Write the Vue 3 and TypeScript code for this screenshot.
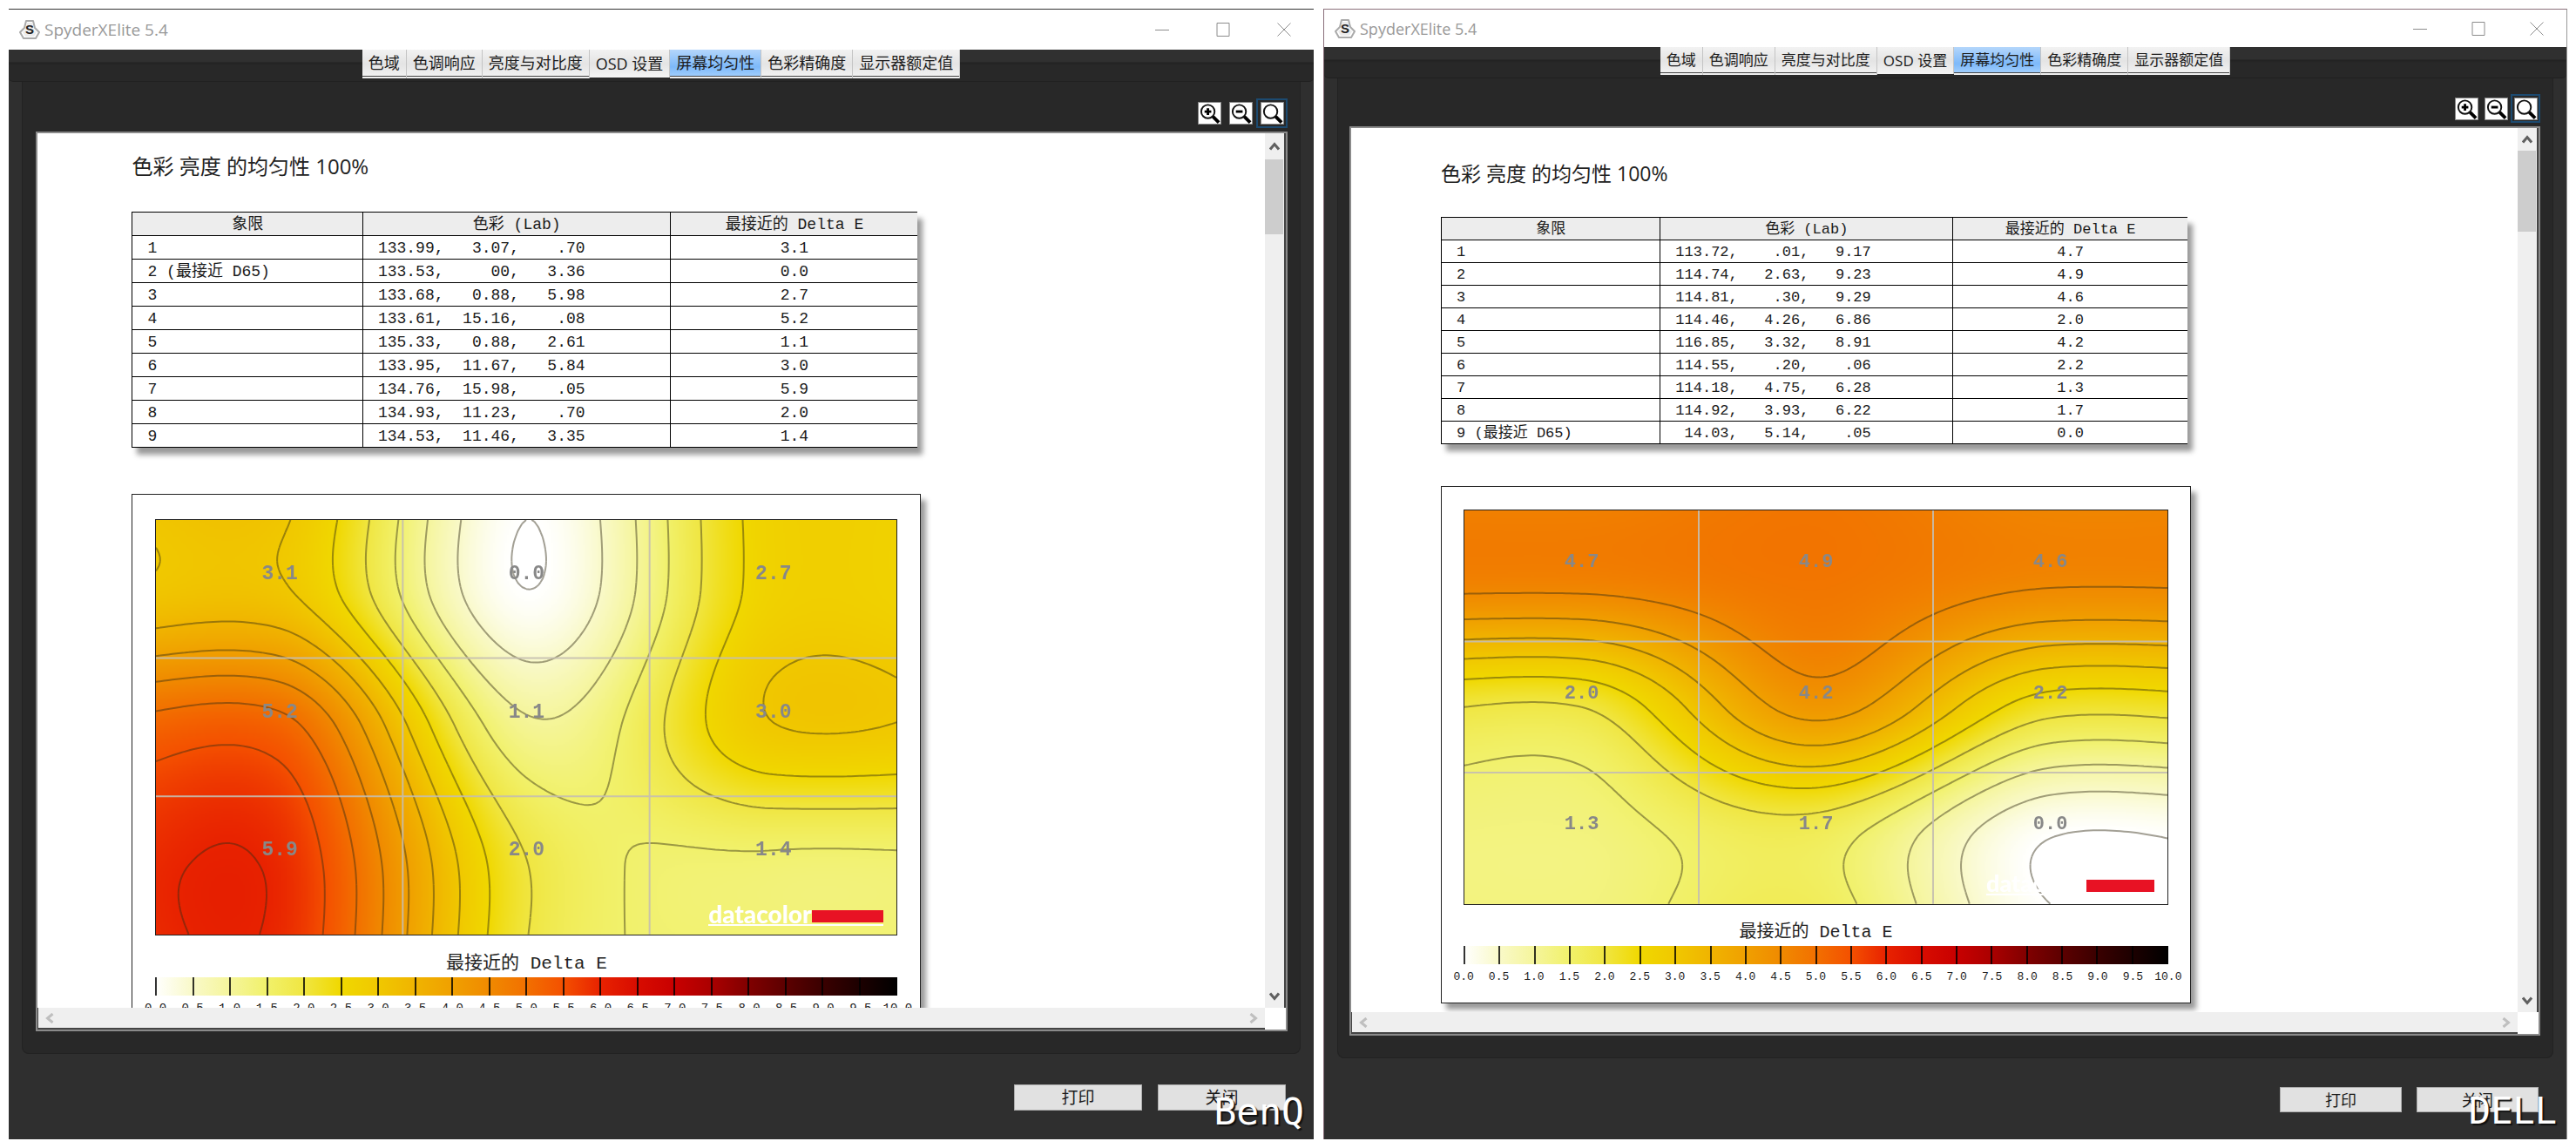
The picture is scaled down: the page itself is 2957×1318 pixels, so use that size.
<script setup lang="ts">
import { onMounted } from 'vue'

interface Row {
  name: string
  lab: string
  delta: string
  reading: number
}

interface Report {
  id: string
  brand: string
  rows: Row[]
  contours: string
}

const tabs = ['色域', '色调响应', '亮度与对比度', 'OSD 设置', '屏幕均匀性', '色彩精确度', '显示器额定值']
const activeTab = '屏幕均匀性'
const ticks = Array.from({ length: 21 }, (_, i) => (i * 0.5).toFixed(1))

// Delta E colour scale, one stop for every half unit from 0 to 10.
const stops = [
  'ffffff', 'f9f9c9', 'f5f59c', 'f1f16b', 'f0e642', 'f0d800', 'f0c800', 'f0b400', 'f0a000', 'f08a00', 'f27000',
  'f45000', 'e82200', 'd80c00', 'c80000', 'aa0000', '800000', '5c0000', '3a0000', '1c0000', '000000',
]
const palette = stops.map((s) => [0, 2, 4].map((i) => parseInt(s.slice(i, i + 2), 16)))
const scaleGradient = `linear-gradient(to right, ${stops.map((s) => '#' + s).join(', ')})`

// Measured quadrants sit at cell centres; the edge repeats the nearest reading.
const knots = [0, 1 / 6, 1 / 2, 5 / 6, 1]

// Cubic Hermite curve: parabolic slopes inside, no curvature at the two ends.
function spline(v: number[]): (t: number) => number {
  const y = [v[0], v[0], v[1], v[2], v[2]]
  const d = [0, (v[1] - v[0]) * 3, (v[2] - v[1]) * 3, 0]
  const left = d[1] / 3
  const right = d[2] / 3
  const m = [-left / 2, left, (d[1] + d[2]) / 2, right, -right / 2]
  return (t) => {
    let k = 0
    while (k < 3 && t > knots[k + 1]) k++
    const h = knots[k + 1] - knots[k]
    const s = (t - knots[k]) / h
    const u = 1 - s
    return (
      y[k] * (1 + 2 * s) * u * u +
      y[k + 1] * s * s * (3 - 2 * s) +
      h * (m[k] * s * u * u - m[k + 1] * s * s * u)
    )
  }
}

function field(rows: Row[], w: number, h: number): number[][] {
  const v = rows.map((r) => r.reading)
  const across = [spline(v.slice(0, 3)), spline(v.slice(3, 6)), spline(v.slice(6, 9))]
  const out: number[][] = Array.from({ length: h + 1 }, () => [])
  for (let i = 0; i <= w; i++) {
    const down = spline(across.map((f) => f(i / w)))
    for (let j = 0; j <= h; j++) out[j][i] = down(j / h)
  }
  return out
}

function traceContours(rows: Row[]): string {
  const w = 180
  const h = 100
  const f = field(rows, w, h)
  const parts: string[] = []
  for (let level = 0; level < 10; level += 0.5) {
    const cut = level + 0.0001
    for (let j = 0; j < h; j++) {
      for (let i = 0; i < w; i++) {
        const corner: [number, number, number][] = [
          [i, j, f[j][i]],
          [i + 1, j, f[j][i + 1]],
          [i + 1, j + 1, f[j + 1][i + 1]],
          [i, j + 1, f[j + 1][i]],
        ]
        const hits: string[] = []
        corner.forEach((p, k) => {
          const q = corner[(k + 1) % 4]
          if (p[2] < cut !== q[2] < cut) {
            const t = (cut - p[2]) / (q[2] - p[2])
            hits.push(`${(p[0] + t * (q[0] - p[0])).toFixed(2)} ${(p[1] + t * (q[1] - p[1])).toFixed(2)}`)
          }
        })
        if (hits.length >= 2) parts.push(`M${hits[0]}L${hits[1]}`)
      }
    }
  }
  return parts.join('')
}

function paint(canvas: HTMLCanvasElement, rows: Row[]) {
  const ctx = canvas.getContext('2d')
  if (!ctx) return
  const { width, height } = canvas
  const f = field(rows, width - 1, height - 1)
  const img = ctx.createImageData(width, height)
  for (let j = 0; j < height; j++) {
    for (let i = 0; i < width; i++) {
      const v = Math.min(9.999, Math.max(0, f[j][i])) * 2
      const k = Math.floor(v)
      const o = (j * width + i) * 4
      for (let ch = 0; ch < 3; ch++) {
        img.data[o + ch] = palette[k][ch] + (palette[k + 1][ch] - palette[k][ch]) * (v - k)
      }
      img.data[o + 3] = 255
    }
  }
  ctx.putImageData(img, 0, 0)
}

// The optional fourth entry is the reading before it is rounded for display.
function makeReport(id: string, brand: string, source: [string, string, string, number?][]): Report {
  const rows = source.map(([name, lab, delta, exact]) => ({ name, lab, delta, reading: exact ?? Number(delta) }))
  return { id, brand, rows, contours: traceContours(rows) }
}

const reports: Report[] = [
  makeReport('benq', 'BenQ', [
    ['1', '133.99,   3.07,    .70', '3.1', 3.06],
    ['2 (最接近 D65)', '133.53,     00,   3.36', '0.0'],
    ['3', '133.68,   0.88,   5.98', '2.7'],
    ['4', '133.61,  15.16,    .08', '5.2'],
    ['5', '135.33,   0.88,   2.61', '1.1'],
    ['6', '133.95,  11.67,   5.84', '3.0', 2.98],
    ['7', '134.76,  15.98,    .05', '5.9', 5.92],
    ['8', '134.93,  11.23,    .70', '2.0', 2.02],
    ['9', '134.53,  11.46,   3.35', '1.4', 1.41],
  ]),
  makeReport('dell', 'DELL', [
    ['1', '113.72,    .01,   9.17', '4.7'],
    ['2', '114.74,   2.63,   9.23', '4.9'],
    ['3', '114.81,    .30,   9.29', '4.6'],
    ['4', '114.46,   4.26,   6.86', '2.0'],
    ['5', '116.85,   3.32,   8.91', '4.2'],
    ['6', '114.55,    .20,    .06', '2.2'],
    ['7', '114.18,   4.75,   6.28', '1.3'],
    ['8', '114.92,   3.93,   6.22', '1.7'],
    ['9 (最接近 D65)', ' 14.03,   5.14,    .05', '0.0'],
  ]),
]

const canvases: Record<string, HTMLCanvasElement> = {}
const keepCanvas = (id: string) => (el: unknown) => {
  if (el) canvases[id] = el as HTMLCanvasElement
}

onMounted(() => {
  for (const r of reports) paint(canvases[r.id], r.rows)
})
</script>

<template>
  <main class="compare">
    <section v-for="r in reports" :key="r.id" class="window" :class="r.id">
      <header class="titlebar">
        <svg class="app-icon" viewBox="0 0 24 24" aria-hidden="true">
          <path d="M8 2h8l2 8 5 5-4 7H5l-4-7 5-5z" fill="#fff" stroke="#aaa" stroke-width="2" stroke-linejoin="round" />
          <path d="M9 4h6l2 8 3 3-3 5H7l-3-5 3-3z" fill="#ececec" />
          <text x="12" y="17" text-anchor="middle" font-size="15" font-weight="700" fill="#222">S</text>
        </svg>
        <h1>SpyderXElite 5.4</h1>
        <div class="controls">
          <button type="button" aria-label="最小化"><svg viewBox="0 0 16 16"><path d="M0 8.500h16" /></svg></button>
          <button type="button" aria-label="最大化"><svg viewBox="0 0 16 16"><path d="M1 .5h14v15H1z" /></svg></button>
          <button type="button" aria-label="关闭窗口"><svg viewBox="0 0 16 16"><path d="M.5.5l15 15M15.500.5l-15 15" /></svg></button>
        </div>
      </header>

      <div class="frame">
        <nav class="tabstrip" role="tablist">
          <button
            v-for="t in tabs"
            :key="t"
            type="button"
            role="tab"
            class="tab"
            :class="{ active: t === activeTab, flat: t.startsWith('OSD') }"
            :aria-selected="t === activeTab"
          >{{ t }}</button>
        </nav>

        <div class="panel">
          <div class="tools">
            <button type="button" aria-label="放大">
              <svg viewBox="0 0 28 26"><circle cx="12" cy="11" r="8" /><path class="handle" d="M18 17l7 7" /><path class="sign" d="M8 11h8M12 7v8" /></svg>
            </button>
            <button type="button" aria-label="缩小">
              <svg viewBox="0 0 28 26"><circle cx="12" cy="11" r="8" /><path class="handle" d="M18 17l7 7" /><path class="sign" d="M8 11h8" /></svg>
            </button>
            <button type="button" class="focused" aria-label="适合窗口">
              <svg viewBox="0 0 28 26"><circle cx="12" cy="11" r="8" /><path class="handle" d="M18 17l7 7" /></svg>
            </button>
          </div>

          <div class="view">
            <div class="sheet">
              <article class="report">
                <h2>色彩 亮度 的均匀性 100%</h2>
                <table>
                  <thead>
                    <tr><th scope="col">象限</th><th scope="col">色彩 (Lab)</th><th scope="col">最接近的 Delta E</th></tr>
                  </thead>
                  <tbody>
                    <tr v-for="row in r.rows" :key="row.name">
                      <td>{{ row.name }}</td>
                      <td class="lab">{{ row.lab }}</td>
                      <td class="delta">{{ row.delta }}</td>
                    </tr>
                  </tbody>
                </table>

                <figure class="card">
                  <div class="plot">
                    <canvas :ref="keepCanvas(r.id)" width="480" height="270"></canvas>
                    <svg viewBox="0 0 180 100" preserveAspectRatio="none" aria-hidden="true">
                      <path class="contour" :d="r.contours" />
                      <path class="thirds" d="M60 0v100M120 0v100M0 33.333h180M0 66.667h180" />
                    </svg>
                    <div class="cells">
                      <span v-for="row in r.rows" :key="row.name">{{ row.delta }}</span>
                    </div>
                    <div class="logo"><span>datacolor</span><i></i></div>
                  </div>
                  <figcaption>最接近的 Delta E</figcaption>
                  <div class="scale" :style="{ background: scaleGradient }"><i v-for="t in ticks" :key="t"></i></div>
                  <div class="numbers"><span v-for="t in ticks" :key="t">{{ t }}</span></div>
                </figure>
              </article>
            </div>
            <div class="vbar">
              <button type="button" aria-label="向上滚动"><svg viewBox="0 0 12 10"><path d="M1 8.500l5-6 5 6" /></svg></button>
              <div class="thumb"></div>
              <button type="button" class="end" aria-label="向下滚动"><svg viewBox="0 0 12 10"><path d="M1 1.500l5 6 5-6" /></svg></button>
            </div>
            <div class="hbar">
              <button type="button" aria-label="向左滚动"><svg viewBox="0 0 10 12"><path d="M8.500 1l-6 5 6 5" /></svg></button>
              <button type="button" aria-label="向右滚动"><svg viewBox="0 0 10 12"><path d="M1.500 1l6 5-6 5" /></svg></button>
            </div>
            <div class="corner"></div>
          </div>
        </div>

        <footer>
          <button type="button">打印</button>
          <button type="button">关闭</button>
        </footer>
      </div>
      <strong class="brand">{{ r.brand }}</strong>
    </section>
  </main>
</template>

<style>
body {
  margin: 0;
  background: #fff;
}
</style>

<style scoped>
* {
  box-sizing: border-box;
}
button {
  margin: 0;
  padding: 0;
  border: 0;
  background: none;
  font: inherit;
  color: inherit;
}
svg {
  display: block;
}
.compare {
  display: grid;
  grid-template-columns: 1498fr 1428fr;
  gap: 11px;
  height: 100vh;
  padding: 10px;
  font-family: "Open Sans", "Noto Sans CJK SC", sans-serif;
}
.window {
  --title-h: 46px;
  --title-font: 19px;
  --tab-font: 18px;
  --tab-h: 33px;
  --strip-h: 37px;
  --tool-w: 36px;
  --tool-h: 34px;
  --tools-top: 19px;
  --tools-bottom: 4px;
  --panel-left: 15px;
  --thumb-h: 86px;
  --thumb-top: 30px;
  --head-font: 24px;
  --head-top: 20px;
  --head-bottom: 34px;
  --row-h: 27px;
  --table-font: 18px;
  --card-top: 53px;
  --pad-top: 28px;
  --pad: 26px;
  --cell-font: 23px;
  --cell-top: 48px;
  --caption-font: 21px;
  --caption-top: 19px;
  --number-font: 14px;
  --logo-font: 28px;
  --logo-bar: 82px;
  --foot-h: 98px;
  --foot-top: 35px;
  --foot-gap: 18px;
  --foot-w: 147px;
  --foot-btn: 30px;
  --foot-font: 19px;
  --brand-font: 43px;
  position: relative;
  display: flex;
  flex-direction: column;
  min-width: 0;
  min-height: 0;
  border-top: 1px solid #333;
}
.window.dell {
  --title-h: 43px;
  --title-font: 18px;
  --tab-font: 17px;
  --tab-h: 32px;
  --strip-h: 36px;
  --tool-w: 34px;
  --tool-h: 33px;
  --tools-top: 18px;
  --panel-left: 13px;
  --thumb-h: 93px;
  --thumb-top: 26px;
  --head-font: 23px;
  --head-top: 34px;
  --head-bottom: 32px;
  --row-h: 26px;
  --table-font: 17px;
  --card-top: 48px;
  --pad-top: 26px;
  --pad: 25px;
  --cell-font: 22px;
  --cell-top: 46px;
  --caption-font: 20px;
  --caption-top: 18px;
  --number-font: 13px;
  --logo-font: 27px;
  --logo-bar: 78px;
  --foot-h: 93px;
  --foot-top: 33px;
  --foot-gap: 17px;
  --foot-w: 140px;
  --foot-btn: 29px;
  --foot-font: 18px;
  --brand-font: 42px;
  border-top-color: #8a6f7a;
  border-left: 1px solid #8a6f7a;
  border-right: 1px solid #999;
}
.titlebar {
  display: flex;
  align-items: center;
  flex: none;
  height: var(--title-h);
  padding: 0 26px 0 12px;
}
.app-icon {
  width: 24px;
  height: 24px;
  font-family: "Liberation Sans", sans-serif;
}
h1 {
  margin: 0 auto 0 5px;
  font-size: var(--title-font);
  font-weight: 400;
  line-height: 24px;
  color: #999;
}
.controls {
  display: flex;
  gap: 54px;
}
.controls svg {
  width: 16px;
  height: 16px;
  fill: none;
  stroke: #8c8c8c;
}
.dell .controls {
  gap: 51px;
}
.frame {
  display: flex;
  flex: 1;
  flex-direction: column;
  min-height: 0;
  background: #2f2f2f;
}
.tabstrip {
  display: flex;
  flex: none;
  justify-content: center;
  align-items: flex-start;
  height: var(--strip-h);
  background: linear-gradient(#303030 14px, #222 15px, #282828 18px);
  border-bottom: 1px solid #202020;
  border-radius: 0 0 5px 5px;
}
.tab {
  height: var(--tab-h);
  padding: 0 7px 3px;
  border-right: 1px solid #c4c4c4;
  background: linear-gradient(#f2f2f2, #e4e4e4 50%, #f4f4f4);
  box-shadow: inset 0 -2px #f0f0f0, inset 0 -3px #444;
  font-size: var(--tab-font);
  line-height: 26px;
  color: #1c1c1c;
  white-space: nowrap;
}
.tab.flat {
  height: calc(var(--tab-h) - 1px);
  padding-bottom: 0;
  box-shadow: none;
}
.tab.active {
  background: linear-gradient(#b4d6fb, #7db9fa 60%, #a9d3fd);
}
.panel {
  display: flex;
  flex: 1;
  flex-direction: column;
  min-height: 0;
  margin: 0 15px;
  padding: 0 14px 25px var(--panel-left);
  border: 1px solid #222;
  border-top: 0;
  border-radius: 0 0 8px 8px;
  background: #282828;
}
.tools {
  display: flex;
  flex: none;
  justify-content: flex-end;
  padding: var(--tools-top) 0 var(--tools-bottom);
}
.tools button {
  display: flex;
  align-items: center;
  justify-content: center;
  width: var(--tool-w);
  height: var(--tool-h);
}
.tools .focused {
  border: 2px solid #1c4a70;
}
.tools svg {
  width: 27px;
  height: 26px;
  background: #fff;
  outline: 1px solid #888;
  outline-offset: -1px;
}
.tools circle {
  fill: #fff;
  stroke: #111;
  stroke-width: 2;
}
.tools .handle {
  stroke: #000;
  stroke-width: 4;
}
.tools .sign {
  stroke: #000;
  stroke-width: 3;
}
.view {
  display: grid;
  flex: 1;
  grid-template-columns: minmax(0, 1fr) 24px;
  grid-template-rows: minmax(0, 1fr) 25px;
  min-height: 0;
  border: 2px solid #8a8a8a;
  background: #fff;
}
.sheet {
  overflow: hidden;
}
.report {
  width: 72%;
  padding: var(--head-top) 0 0 7.7%;
}
h2 {
  margin: 0 0 var(--head-bottom);
  font-size: var(--head-font);
  font-weight: 400;
  line-height: 36px;
  color: #222;
}
table {
  width: calc(100% - 4px);
  table-layout: fixed;
  border-collapse: collapse;
  background: #fff;
  box-shadow: 6px 8px 6px rgba(0, 0, 0, 0.4);
  font-family: "Liberation Mono", "Noto Sans CJK SC", monospace;
  font-size: var(--table-font);
  line-height: 20px;
  color: #1a1a1a;
}
th,
td {
  height: var(--row-h);
  padding: 2px 0 0;
  border: 1px solid #000;
  border-right: 0;
  font-weight: 400;
  white-space: pre;
}
th {
  background: #ededed;
}
th:first-child {
  width: calc(100% * 264 / 900);
}
th:nth-child(2) {
  width: calc(100% * 353 / 900);
}
td {
  padding-left: 17px;
}
td.delta {
  padding-left: 0;
  text-align: center;
}
.card {
  margin: var(--card-top) 0 0;
  padding: var(--pad-top) var(--pad) 21px;
  border: 1px solid #222;
  background: #fff;
  box-shadow: 6px 7px 6px rgba(0, 0, 0, 0.4);
}
.plot {
  position: relative;
  aspect-ratio: 107 / 60;
  border: 1px solid #222;
}
.plot canvas,
.plot svg,
.cells {
  position: absolute;
  inset: 0;
  width: 100%;
  height: 100%;
}
.contour {
  fill: none;
  stroke: rgba(50, 45, 20, 0.45);
  stroke-width: 2;
  vector-effect: non-scaling-stroke;
}
.thirds {
  stroke: rgba(196, 190, 176, 0.9);
  stroke-width: 2;
  vector-effect: non-scaling-stroke;
}
.cells {
  display: grid;
  grid-template: repeat(3, 1fr) / repeat(3, 1fr);
  font: 700 var(--cell-font) / 28px "Liberation Mono", monospace;
  color: #888;
  text-align: center;
}
.cells span {
  padding-top: var(--cell-top);
}
.logo {
  position: absolute;
  right: 15px;
  bottom: 10px;
  display: flex;
  align-items: flex-end;
  border-bottom: 2px solid #fff;
  font: 900 var(--logo-font) / 24px Lato, sans-serif;
  color: #fff;
}
.logo i {
  width: var(--logo-bar);
  height: 14px;
  margin: 0 0 2px 1px;
  background: #e81224;
}
figcaption {
  margin: var(--caption-top) 0 1px;
  font: var(--caption-font) / 28px "Liberation Mono", "Noto Sans CJK SC", monospace;
  color: #222;
  text-align: center;
}
.scale,
.numbers {
  display: flex;
  justify-content: space-between;
}
.scale {
  height: 21px;
}
.scale i {
  width: 2px;
  background: rgba(0, 0, 0, 0.8);
}
.numbers {
  margin-top: 7px;
  font: var(--number-font) / 16px "Liberation Mono", monospace;
  color: #222;
}
.numbers span {
  display: flex;
  justify-content: center;
  width: 0;
}
.vbar,
.hbar {
  display: flex;
  background: #efefef;
}
.vbar {
  flex-direction: column;
  border-right: 2px solid #444;
}
.hbar {
  justify-content: space-between;
  border-bottom: 2px solid #444;
  border-left: 1px solid #444;
}
.vbar button,
.hbar button {
  display: flex;
  align-items: center;
  justify-content: center;
}
.vbar button {
  height: var(--thumb-top);
}
.vbar .end {
  height: 26px;
  margin-top: auto;
}
.hbar button {
  width: 26px;
}
.thumb {
  height: var(--thumb-h);
  margin-right: 1px;
  background: #cdcdcd;
}
.vbar svg {
  width: 12px;
  height: 10px;
}
.hbar svg {
  width: 10px;
  height: 12px;
}
.vbar path,
.hbar path {
  fill: none;
  stroke: #606060;
  stroke-width: 3;
}
.hbar path {
  stroke: #bfbfbf;
}
.corner {
  background: #fff;
}
footer {
  display: flex;
  flex: none;
  align-items: flex-start;
  justify-content: flex-end;
  gap: var(--foot-gap);
  height: var(--foot-h);
  padding: var(--foot-top) 32px 0;
}
footer button {
  width: var(--foot-w);
  height: var(--foot-btn);
  border: 1px solid #adadad;
  background: #e1e1e1;
  font-size: var(--foot-font);
  line-height: 26px;
  color: #1a1a1a;
}
.brand {
  position: absolute;
  right: 11px;
  bottom: 8px;
  font: 400 var(--brand-font) / 48px "DejaVu Sans Mono", monospace;
  color: #fff;
  text-shadow: 2px 2px 1px #111;
}
</style>
